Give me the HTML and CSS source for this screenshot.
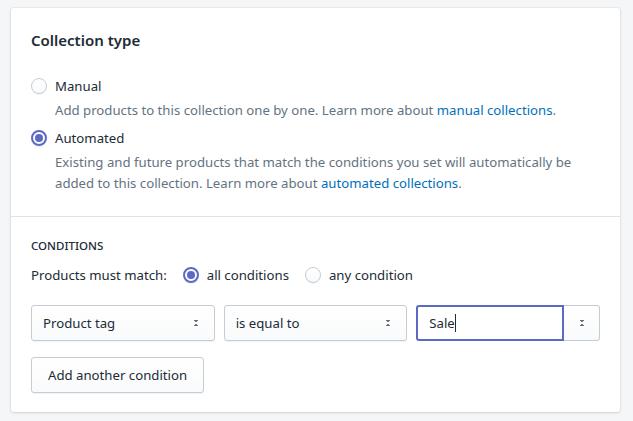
FILE: index.html
```html
<!DOCTYPE html>
<html lang="en">
<head>
    <meta charset="UTF-8">
    <title>Collection type</title>
    <link rel="stylesheet" href="styles.css">
</head>
<body>
    <div class="card">
        <div class="section">
            <h2>Collection type</h2>
            <div class="choices">
                <label class="choice">
                    <span class="radio"></span>
                    <span>Manual</span>
                </label>
                <p class="help">Add products to this collection one by one. Learn more about <a href="#">manual collections</a>.</p>
                <label class="choice">
                    <span class="radio checked"></span>
                    <span>Automated</span>
                </label>
                <p class="help">Existing and future products that match the conditions you set will automatically be added to this collection. Learn more about <a href="#">automated collections</a>.</p>
            </div>
        </div>
        <div class="section">
            <h3>Conditions</h3>
            <div class="match">
                <span>Products must match:</span>
                <label class="choice"><span class="radio checked"></span><span>all conditions</span></label>
                <label class="choice"><span class="radio"></span><span>any condition</span></label>
            </div>
            <div class="row">
                <div class="select"><span>Product tag</span><span class="arrows"></span></div>
                <div class="select"><span>is equal to</span><span class="arrows"></span></div>
                <div class="combo">
                    <div class="text-input">Sale<span class="caret"></span></div>
                    <div class="combo-arrow"><span class="arrows"></span></div>
                </div>
            </div>
            <button class="btn">Add another condition</button>
        </div>
    </div>
</body>
</html>
```

FILE: styles.css
```css
body {
    font-family: "Segoe UI", "Noto Sans", "Open Sans", sans-serif;
    margin: 0;
    padding: 8px 13px 9px 11px;
    background-color: #f4f6f8;
    color: #212b36;
    font-size: 13.2px;
}
.card {
    background-color: #fff;
    border-radius: 3px;
    box-shadow: 0 0 0 1px rgba(63, 63, 68, 0.05), 0 1px 3px 0 rgba(63, 63, 68, 0.15);
}
.section {
    padding: 20px 20px 22px;
}
.section + .section {
    border-top: 1px solid #dfe3e8;
    padding-top: 21px;
    padding-bottom: 19px;
}
h2 {
    margin: 0 0 24px;
    font-size: 15px;
    font-weight: 600;
    line-height: 24px;
}
h3 {
    margin: 0 0 11px;
    font-size: 11.5px;
    font-weight: 500;
    text-transform: uppercase;
    line-height: 16px;
}
.choice {
    display: flex;
    align-items: center;
    line-height: 20px;
}
.radio {
    width: 14px;
    height: 14px;
    border: 1px solid #c4cdd5;
    border-radius: 50%;
    margin-right: 8px;
    background: linear-gradient(#fff, #f9fafb);
    box-shadow: 0 1px 0 rgba(22, 29, 37, 0.05);
    position: relative;
}
.radio.checked {
    border: 2px solid #5c6ac4;
    width: 12px;
    height: 12px;
}
.radio.checked::after {
    content: "";
    position: absolute;
    left: 2px;
    top: 2px;
    width: 8px;
    height: 8px;
    border-radius: 50%;
    background-color: #5c6ac4;
}
.help {
    margin: 4px 0 7px 24px;
    color: #637381;
    line-height: 21px;
}
.help:last-child {
    margin-bottom: 0;
}
a {
    color: #006fbb;
    text-decoration: none;
}
.match {
    display: flex;
    align-items: center;
    gap: 16px;
    line-height: 20px;
    margin-bottom: 20px;
}
.row {
    display: grid;
    grid-template-columns: minmax(0, 1fr) minmax(0, 1fr) minmax(0, 1fr);
    gap: 9px;
    margin-bottom: 16px;
}
.select, .combo {
    height: 36px;
    box-sizing: border-box;
    border: 1px solid #c4cdd5;
    border-radius: 3px;
    background: linear-gradient(#fff, #f9fafb);
    box-shadow: 0 1px 0 rgba(22, 29, 37, 0.05);
    display: flex;
    align-items: center;
}
.select {
    justify-content: space-between;
    padding: 0 14px 0 11px;
}
.arrows {
    width: 8px;
    height: 12px;
    background:
        linear-gradient(to top right, transparent 50%, #637381 50%) 0 2px / 4px 3px no-repeat,
        linear-gradient(to top left, transparent 50%, #637381 50%) 4px 2px / 4px 3px no-repeat,
        linear-gradient(to bottom right, transparent 50%, #637381 50%) 0 7px / 4px 3px no-repeat,
        linear-gradient(to bottom left, transparent 50%, #637381 50%) 4px 7px / 4px 3px no-repeat;
    transform: scale(0.75);
}
.combo {
    border: none;
    background: none;
    box-shadow: none;
}
.text-input {
    flex: 1;
    align-self: stretch;
    display: flex;
    align-items: center;
    padding: 0 11px;
    border: 2px solid #5c6ac4;
    border-radius: 3px 0 0 3px;
    background-color: #fff;
}
.caret {
    width: 1px;
    height: 18px;
    background-color: #212b36;
}
.combo-arrow {
    width: 36px;
    align-self: stretch;
    box-sizing: border-box;
    border: 1px solid #c4cdd5;
    border-left: none;
    border-radius: 0 3px 3px 0;
    background: linear-gradient(#fff, #f9fafb);
    display: flex;
    align-items: center;
    justify-content: center;
}
.btn {
    font-family: inherit;
    font-size: 13.2px;
    color: #212b36;
    height: 36px;
    padding: 0 16px;
    border: 1px solid #c4cdd5;
    border-radius: 3px;
    background: linear-gradient(#fff, #f9fafb);
    box-shadow: 0 1px 0 rgba(22, 29, 37, 0.05);
}
```
